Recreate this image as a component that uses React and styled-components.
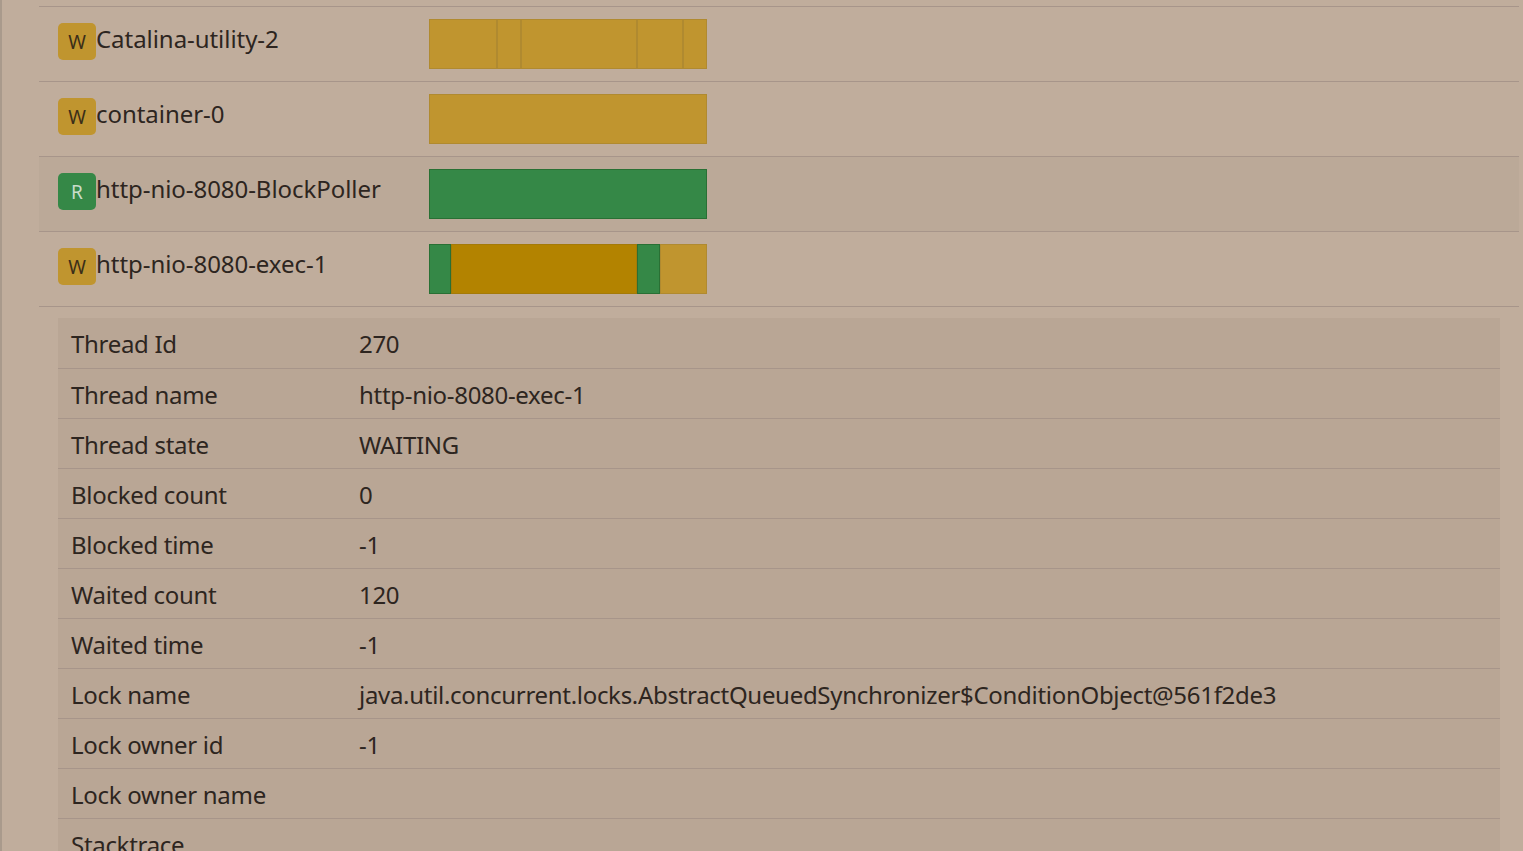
import React from 'react';
import styled, { createGlobalStyle } from 'styled-components';

const GlobalStyle = createGlobalStyle`
  html, body {
    margin: 0;
    padding: 0;
    background: #c0ad9c;
  }
  body {
    font-family: "Noto Sans", "Open Sans", sans-serif;
    color: #2d2520;
    overflow: hidden;
  }
`;

const threads = [
  {
    name: 'Catalina-utility-2',
    state: 'W',
    segments: [
      { w: 68, kind: 'wait' },
      { w: 24, kind: 'wait' },
      { w: 116, kind: 'wait' },
      { w: 46, kind: 'wait' },
      { w: 24, kind: 'wait' },
    ],
  },
  { name: 'container-0', state: 'W', segments: [{ w: 278, kind: 'wait' }] },
  { name: 'http-nio-8080-BlockPoller', state: 'R', hover: true, segments: [{ w: 278, kind: 'run' }] },
  {
    name: 'http-nio-8080-exec-1',
    state: 'W',
    segments: [
      { w: 22, kind: 'run' },
      { w: 186, kind: 'timed' },
      { w: 23, kind: 'run' },
      { w: 47, kind: 'wait' },
    ],
  },
];

const details = [
  ['Thread Id', '270'],
  ['Thread name', 'http-nio-8080-exec-1'],
  ['Thread state', 'WAITING'],
  ['Blocked count', '0'],
  ['Blocked time', '-1'],
  ['Waited count', '120'],
  ['Waited time', '-1'],
  ['Lock name', 'java.util.concurrent.locks.AbstractQueuedSynchronizer$ConditionObject@561f2de3'],
  ['Lock owner id', '-1'],
  ['Lock owner name', ''],
  ['Stacktrace', ''],
];

const segColors = {
  wait: '#c0952f',
  run: '#358847',
  timed: '#b38300',
};

const Page = styled.div`
  border-left: 2px solid #a99a8c;
  min-height: 851px;
  padding: 6px 4px 0 37px;
  box-sizing: border-box;
`;

const ThreadList = styled.div`
  border-top: 1px solid #a7958a;
`;

const ThreadRow = styled.div`
  display: grid;
  grid-template-columns: 390px 1fr;
  height: 75px;
  box-sizing: border-box;
  border-bottom: 1px solid #a7958a;
  background: ${(p) => (p.$hover ? '#bba998' : 'transparent')};
`;

const NameCell = styled.div`
  display: flex;
  align-items: flex-start;
  padding: 15px 0 0 19px;
  font-size: 24px;
  line-height: 34px;
  letter-spacing: -0.05px;
`;

const Badge = styled.span`
  display: inline-flex;
  align-items: center;
  justify-content: center;
  width: 38px;
  height: 37px;
  border-radius: 5px;
  font-size: 19px;
  margin-top: 1px;
  padding-top: 1px;
  box-sizing: border-box;
  background: ${(p) => (p.$state === 'R' ? '#358847' : '#c0952f')};
  color: ${(p) => (p.$state === 'R' ? '#c9dcc9' : '#3a2e18')};
`;

const BarCell = styled.div`
  display: flex;
  align-items: center;
`;

const Bar = styled.div`
  display: flex;
  height: 50px;
  width: 278px;
`;

const Segment = styled.div`
  height: 100%;
  box-sizing: border-box;
  border: 1px solid;
  background: ${(p) => segColors[p.$kind]};
  border-color: ${(p) =>
    p.$kind === 'run' ? 'rgba(40, 110, 50, 0.9)' : p.$kind === 'timed' ? '#a47a08' : '#b08a30'};
`;

const Details = styled.table`
  margin: 11px 19px 0 19px;
  width: calc(100% - 38px);
  border-collapse: collapse;
  background: #b9a695;
  font-size: 24px;
  letter-spacing: -0.3px;
`;

const Row = styled.tr`
  height: 50px;
  border-bottom: 1px solid #a7958a;
`;

const Label = styled.td`
  width: 288px;
  padding: 2px 0 0 13px;
  vertical-align: middle;
`;

const Value = styled.td`
  padding: 2px 0 0 0;
  vertical-align: middle;
`;

export default function App() {
  return (
    <>
      <GlobalStyle />
      <Page>
        <ThreadList>
          {threads.map((t) => (
            <ThreadRow key={t.name} $hover={t.hover}>
              <NameCell>
                <Badge $state={t.state}>{t.state}</Badge>
                <span>{t.name}</span>
              </NameCell>
              <BarCell>
                <Bar>
                  {t.segments.map((s, i) => (
                    <Segment key={i} $kind={s.kind} style={{ width: s.w }} />
                  ))}
                </Bar>
              </BarCell>
            </ThreadRow>
          ))}
        </ThreadList>
        <Details>
          <tbody>
            {details.map(([k, v]) => (
              <Row key={k}>
                <Label>{k}</Label>
                <Value>{v}</Value>
              </Row>
            ))}
          </tbody>
        </Details>
      </Page>
    </>
  );
}
